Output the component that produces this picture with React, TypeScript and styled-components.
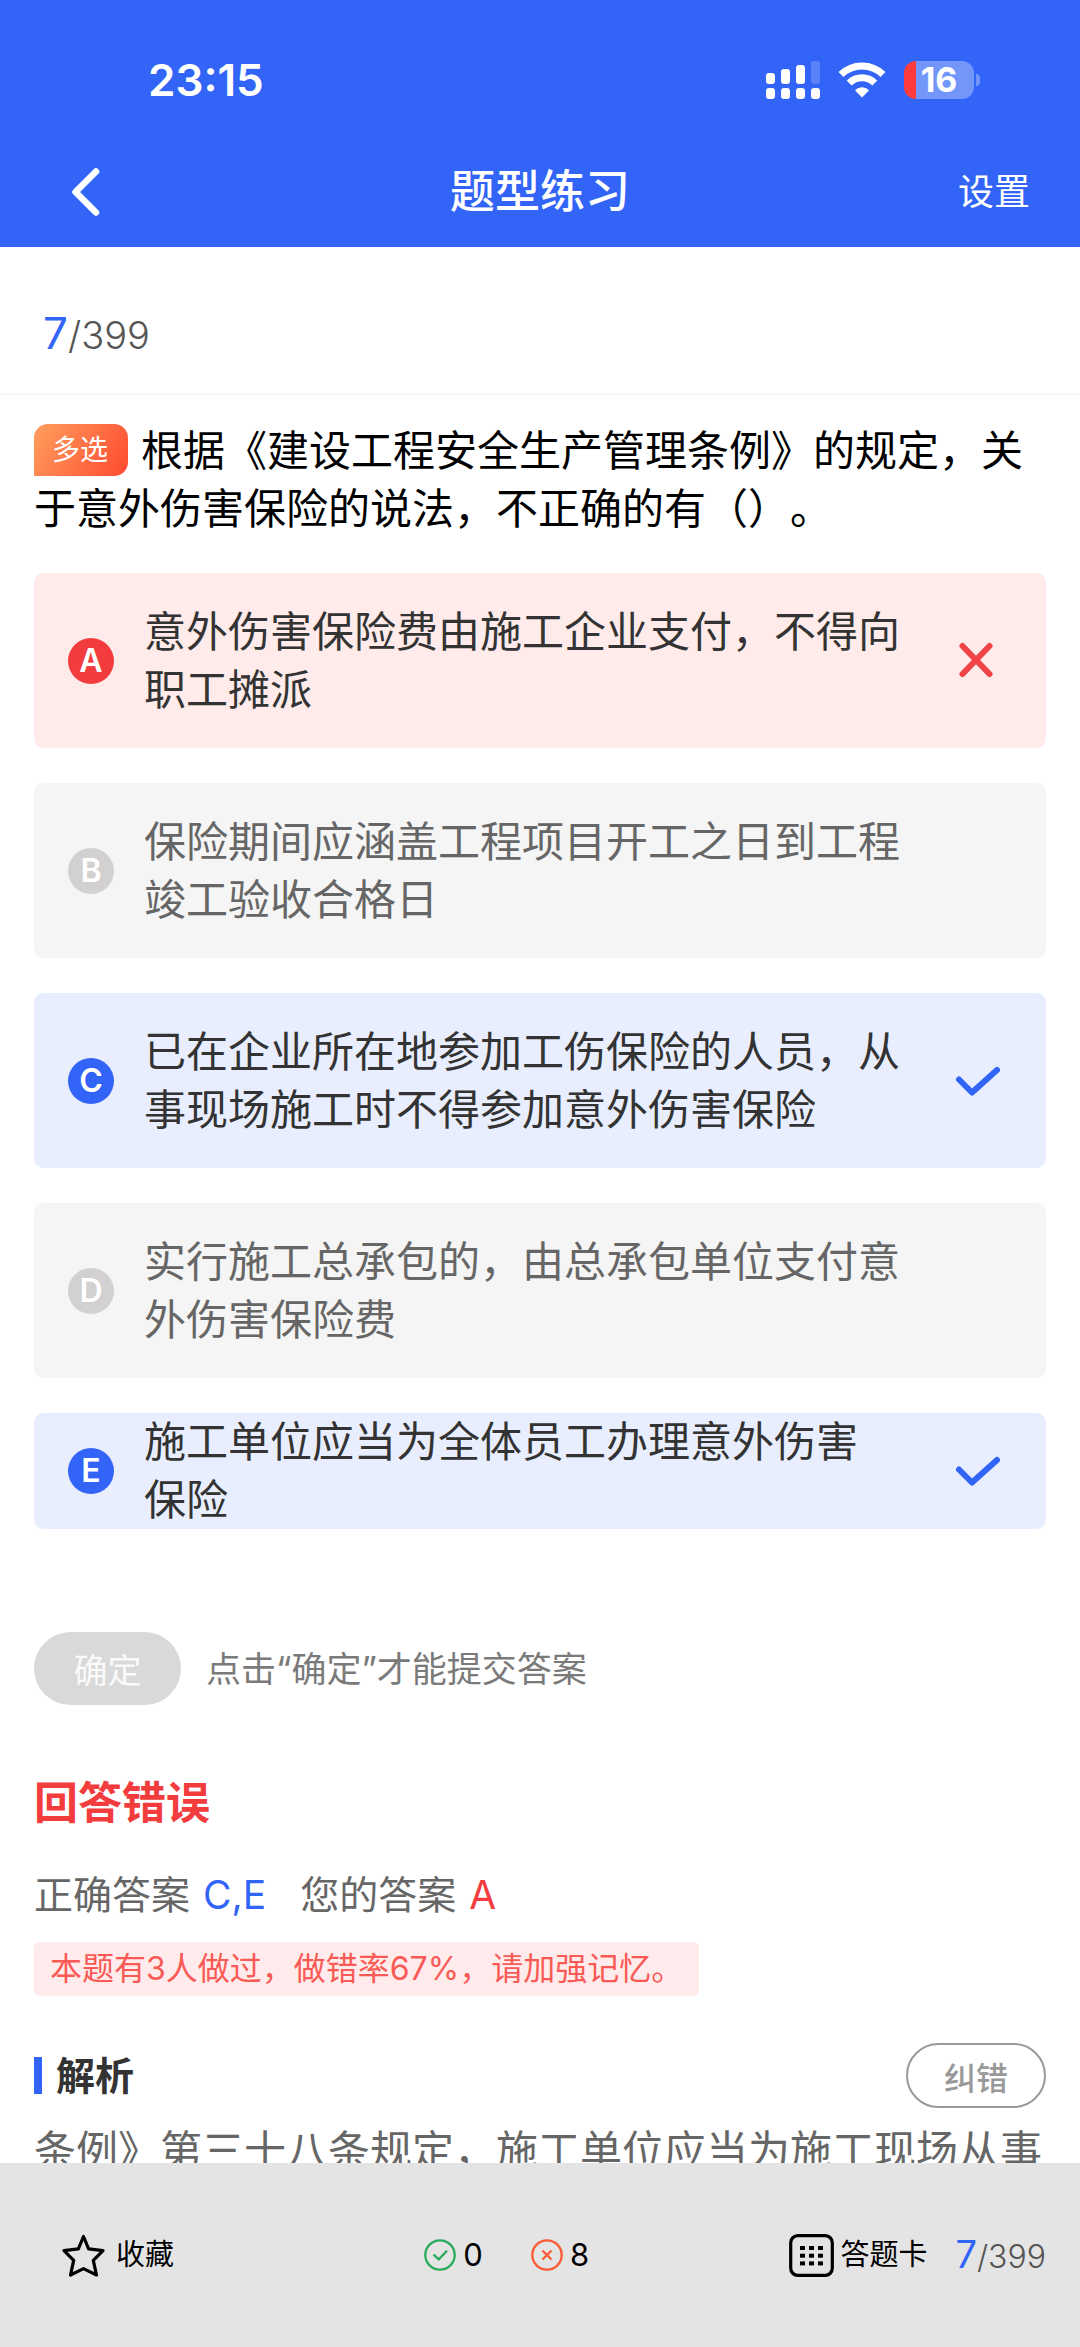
import React from "react";
import styled, { createGlobalStyle } from "styled-components";

const BLUE = "#3264f7";
const RED = "#f23c3e";

const GlobalStyle = createGlobalStyle`
  * { box-sizing: border-box; }
  body {
    margin: 0;
    background: #fff;
    font-family: Inter, "Noto Sans CJK SC", sans-serif;
    text-spacing-trim: space-all;
    -webkit-font-smoothing: antialiased;
  }
  button {
    font-family: inherit;
    border: 0;
    padding: 0;
    background: none;
    color: inherit;
    cursor: pointer;
  }
  h1, h2, p, ul { margin: 0; padding: 0; font-weight: 400; }
  svg { display: block; flex: none; }
`;

const Page = styled.div`
  display: flex;
  flex-direction: column;
  height: 100vh;
`;

const Header = styled.header`
  flex: none;
  background: ${BLUE};
  color: #fff;
`;

const StatusBar = styled.div`
  display: flex;
  align-items: center;
  justify-content: space-between;
  height: 137px;
  padding: 22px 100px 0 148px;
`;

const Clock = styled.time`
  font-size: 44px;
  line-height: 52px;
  font-weight: 600;
`;

const StatusIcons = styled.div`
  display: flex;
  align-items: center;
  gap: 18px;
`;

const BatteryWrap = styled.div`
  display: flex;
  align-items: center;
  gap: 2px;
`;

const Battery = styled.div`
  width: 70px;
  height: 38px;
  border-radius: 12px;
  background: linear-gradient(90deg, #ff3b3d 12px, #7396fa 12px);
  font-size: 34px;
  line-height: 38px;
  font-weight: 700;
  text-align: center;
`;

const BatteryNub = styled.div`
  width: 4px;
  height: 12px;
  border-radius: 0 4px 4px 0;
  background: #7396fa;
`;

const NavBar = styled.nav`
  display: grid;
  grid-template-columns: 1fr auto 1fr;
  align-items: center;
  height: 110px;
  padding: 0 50px;
`;

const BackButton = styled.button`
  justify-self: start;
  padding: 0 20px;
`;

const NavTitle = styled.h1`
  font-size: 45px;
  line-height: 60px;
  font-weight: 500;
`;

const SettingsButton = styled.button`
  justify-self: end;
  font-size: 36px;
  line-height: 48px;
`;

const Main = styled.main`
  flex: 1;
  min-height: 0;
  overflow-y: auto;
  scrollbar-width: none;
`;

const ProgressRow = styled.div`
  height: 148px;
  padding: 56px 43px 0;
  border-bottom: 2px solid #f6f6f6;
`;

const Progress = styled.span<{ $small?: boolean }>`
  font-size: ${(p) => (p.$small ? 32 : 38)}px;
  line-height: 60px;
  font-weight: 300;
  color: #555;
`;

const Current = styled.span<{ $small?: boolean }>`
  font-size: ${(p) => (p.$small ? 38 : 44)}px;
  font-weight: 400;
  color: ${BLUE};
`;

const Content = styled.div`
  padding: 27px 34px 0;
`;

const Question = styled.p`
  font-size: 42px;
  line-height: 58px;
  color: #000;
`;

const TypeBadge = styled.span`
  display: inline-block;
  vertical-align: top;
  height: 52px;
  margin: 2px 13px 0 0;
  padding: 0 20px 0 18px;
  border-radius: 14px 14px 14px 0;
  background: linear-gradient(120deg, #ff9f5e, #ff4a30);
  color: #fff;
  font-size: 28px;
  line-height: 52px;
`;

const OptionList = styled.ul`
  display: flex;
  flex-direction: column;
  gap: 35px;
  margin-top: 35px;
  list-style: none;
`;

type Tone = "wrong" | "right" | "idle";

const tones = {
  wrong: { card: "#feebea", dot: RED, text: "#333" },
  right: { card: "#e9eefe", dot: BLUE, text: "#333" },
  idle: { card: "#f5f5f5", dot: "#d2d0d0", text: "#666" },
};

const OptionCard = styled.button<{ $tone: Tone; $compact?: boolean }>`
  display: flex;
  align-items: center;
  width: 100%;
  padding: ${(p) => (p.$compact ? "0 44px 0 34px" : "30px 44px 29px 34px")};
  border-radius: 9px;
  background: ${(p) => tones[p.$tone].card};
  color: ${(p) => tones[p.$tone].text};
  text-align: left;
`;

const Letter = styled.span<{ $tone: Tone }>`
  flex: none;
  width: 46px;
  height: 46px;
  margin-right: 30px;
  border-radius: 50%;
  background: ${(p) => tones[p.$tone].dot};
  color: #fff;
  font-size: 32px;
  line-height: 46px;
  font-weight: 600;
  text-align: center;
`;

const OptionText = styled.span`
  flex: 1;
  padding-right: 24px;
  font-size: 42px;
  line-height: 58px;
  white-space: pre-line;
`;

const MarkSlot = styled.span`
  flex: none;
  width: 52px;
  height: 46px;
`;

const SubmitRow = styled.div`
  display: flex;
  align-items: center;
  gap: 25px;
  margin-top: 103px;
`;

const SubmitButton = styled.button`
  width: 147px;
  height: 73px;
  border-radius: 37px;
  background: #d9d9d9;
  color: #fafafa;
  font-size: 34px;
`;

const SubmitHint = styled.span`
  font-size: 35px;
  line-height: 48px;
  color: #7a7a7a;
`;

const Verdict = styled.h2`
  margin-top: 68px;
  font-size: 44px;
  line-height: 60px;
  font-weight: 700;
  color: ${RED};
`;

const AnswerRow = styled.div`
  display: flex;
  gap: 34px;
  margin-top: 37px;
  font-size: 39px;
  line-height: 50px;
  color: #666;
`;

const Answer = styled.span<{ $color: string }>`
  margin-left: 13px;
  color: ${(p) => p.$color};
`;

const StatTag = styled.p`
  width: fit-content;
  margin-top: 22px;
  padding: 0 16px;
  border-radius: 5px;
  background: #ffebeb;
  color: #f95a55;
  font-size: 32px;
  line-height: 54px;
`;

const SectionHead = styled.div`
  display: flex;
  align-items: center;
  justify-content: space-between;
  margin-top: 47px;
`;

const SectionTitle = styled.h2`
  display: flex;
  align-items: center;
  gap: 14px;
  font-size: 39px;
  line-height: 56px;
  font-weight: 700;
  color: #333;

  &::before {
    content: "";
    width: 8px;
    height: 37px;
    background: ${BLUE};
  }
`;

const ReportButton = styled.button`
  width: 140px;
  height: 65px;
  border: 2px solid #999;
  border-radius: 33px;
  color: #999;
  font-size: 32px;
  font-weight: 500;
`;

const Analysis = styled.p`
  margin-top: 14px;
  font-size: 42px;
  line-height: 58px;
  color: #666;
`;

const Footer = styled.footer`
  flex: none;
  display: flex;
  align-items: center;
  justify-content: space-between;
  height: 184px;
  padding: 0 34px 0 62px;
  background: #e4e4e4;
  color: #000;
`;

const FooterGroup = styled.div<{ $gap: number }>`
  display: flex;
  align-items: center;
  gap: ${(p) => p.$gap}px;
`;

const TallyGroup = styled.div`
  display: flex;
  align-items: center;
  gap: 48px;
  padding-left: 50px;
`;

const FooterButton = styled.button<{ $gap: number }>`
  display: flex;
  align-items: center;
  gap: ${(p) => p.$gap}px;
  font-size: 29px;
  line-height: 44px;
`;

const Tally = styled.span`
  display: flex;
  align-items: center;
  gap: 7px;
  font-size: 31px;
  line-height: 44px;
`;

const SignalIcon = () => (
  <svg width="54" height="38" viewBox="0 0 54 38" fill="#fff">
    <rect x="0" y="12" width="9" height="11" rx="3" />
    <rect x="15" y="8" width="9" height="15" rx="3" />
    <rect x="30" y="4" width="9" height="19" rx="3" />
    <rect x="45" y="0" width="9" height="23" rx="3" opacity=".2" />
    <rect x="0" y="27" width="9" height="11" rx="3" />
    <rect x="15" y="27" width="9" height="11" rx="3" />
    <rect x="30" y="27" width="9" height="11" rx="3" />
    <rect x="45" y="27" width="9" height="11" rx="3" />
  </svg>
);

const WifiIcon = () => (
  <svg width="48" height="36" viewBox="0 0 48 36">
    <path d="M3 12.5A30 30 0 0 1 45 12.5" fill="none" stroke="#fff" strokeWidth="7" />
    <path d="M11.2 21A18.300 18.300 0 0 1 36.800 21" fill="none" stroke="#fff" strokeWidth="7" />
    <path d="M24 35.500L17.300 28.800Q17.200 27.800 18.500 27A10 10 0 0 1 29.500 27Q30.800 27.800 30.700 28.800Z" fill="#fff" />
  </svg>
);

const BackIcon = () => (
  <svg width="32" height="50" viewBox="0 0 32 50" fill="none" stroke="#fff" strokeWidth="6.500" strokeLinecap="round" strokeLinejoin="round">
    <path d="M26 4.500L5.500 25L26 45.500" />
  </svg>
);

const CrossMark = () => (
  <svg width="52" height="46" viewBox="0 0 52 46" fill="none" stroke="#ef4345" strokeWidth="6" strokeLinecap="round">
    <path d="M12.500 8L39.500 36M39.500 8L12.500 36" />
  </svg>
);

const CheckMark = () => (
  <svg width="52" height="46" viewBox="0 0 52 46" fill="none" stroke={BLUE} strokeWidth="6" strokeLinecap="round" strokeLinejoin="round">
    <path d="M9 21.500L22 34.500L47 12" />
  </svg>
);

const StarIcon = () => (
  <svg width="43" height="43" viewBox="0 0 43 43" fill="none" stroke="#000" strokeWidth="3.200" strokeLinejoin="round">
    <path d="M21.500 2.500L26.600 14.800L41 16.600L31.300 26.300L34.500 41L21.500 34.600L8.500 41L11.700 26.300L2 16.600L16.400 14.800Z" />
  </svg>
);

const RightIcon = () => (
  <svg width="32" height="32" viewBox="0 0 32 32" fill="none" stroke="#2aab5b" strokeWidth="2.300">
    <circle cx="16" cy="16" r="14.700" />
    <path d="M9.500 15.500L14.800 20.300L23 11.800" />
  </svg>
);

const WrongIcon = () => (
  <svg width="32" height="32" viewBox="0 0 32 32" fill="none" stroke="#fb5b35" strokeWidth="2.300">
    <circle cx="16" cy="16" r="14.700" />
    <path d="M11.500 11.500L20.500 20.500M20.500 11.500L11.500 20.500" />
  </svg>
);

const CardIcon = () => (
  <svg width="45" height="43" viewBox="0 0 45 43">
    <rect x="1.700" y="1.700" width="41.600" height="39.600" rx="7" fill="none" stroke="#000" strokeWidth="3.200" />
    {[12, 19.700, 27.400].map((y) =>
      [11, 20, 29].map((x) => <rect key={`${x}-${y}`} x={x} y={y} width="5" height="4" />)
    )}
  </svg>
);

const options: { letter: string; text: string; tone: Tone; compact?: boolean }[] = [
  { letter: "A", text: "意外伤害保险费由施工企业支付，不得向职工摊派", tone: "wrong" },
  { letter: "B", text: "保险期间应涵盖工程项目开工之日到工程竣工验收合格日", tone: "idle" },
  { letter: "C", text: "已在企业所在地参加工伤保险的人员，从事现场施工时不得参加意外伤害保险", tone: "right" },
  { letter: "D", text: "实行施工总承包的，由总承包单位支付意外伤害保险费", tone: "idle" },
  { letter: "E", text: "施工单位应当为全体员工办理意外伤害\n保险", tone: "right", compact: true },
];

export default function App() {
  return (
    <>
      <GlobalStyle />
      <Page>
        <Header>
          <StatusBar>
            <Clock>23:15</Clock>
            <StatusIcons>
              <SignalIcon />
              <WifiIcon />
              <BatteryWrap>
                <Battery>16</Battery>
                <BatteryNub />
              </BatteryWrap>
            </StatusIcons>
          </StatusBar>
          <NavBar>
            <BackButton type="button" aria-label="返回">
              <BackIcon />
            </BackButton>
            <NavTitle>题型练习</NavTitle>
            <SettingsButton type="button">设置</SettingsButton>
          </NavBar>
        </Header>

        <Main>
          <ProgressRow>
            <Progress>
              <Current>7</Current>/399
            </Progress>
          </ProgressRow>

          <Content>
            <Question>
              <TypeBadge>多选</TypeBadge>
              根据《建设工程安全生产管理条例》的规定，关于意外伤害保险的说法，不正确的有（）。
            </Question>

            <OptionList>
              {options.map((o) => (
                <li key={o.letter}>
                  <OptionCard type="button" $tone={o.tone} $compact={o.compact}>
                    <Letter $tone={o.tone}>{o.letter}</Letter>
                    <OptionText>{o.text}</OptionText>
                    <MarkSlot>
                      {o.tone === "wrong" && <CrossMark />}
                      {o.tone === "right" && <CheckMark />}
                    </MarkSlot>
                  </OptionCard>
                </li>
              ))}
            </OptionList>

            <SubmitRow>
              <SubmitButton type="button">确定</SubmitButton>
              <SubmitHint>点击“确定”才能提交答案</SubmitHint>
            </SubmitRow>

            <Verdict>回答错误</Verdict>
            <AnswerRow>
              <span>
                正确答案<Answer $color={BLUE}>C,E</Answer>
              </span>
              <span>
                您的答案<Answer $color={RED}>A</Answer>
              </span>
            </AnswerRow>
            <StatTag>本题有3人做过，做错率67%，请加强记忆。</StatTag>

            <SectionHead>
              <SectionTitle>解析</SectionTitle>
              <ReportButton type="button">纠错</ReportButton>
            </SectionHead>
            <Analysis>条例》第三十八条规定，施工单位应当为施工现场从事</Analysis>
          </Content>
        </Main>

        <Footer>
          <FooterButton type="button" $gap={11}>
            <StarIcon />
            收藏
          </FooterButton>
          <TallyGroup>
            <Tally>
              <RightIcon />0
            </Tally>
            <Tally>
              <WrongIcon />8
            </Tally>
          </TallyGroup>
          <FooterGroup $gap={28}>
            <FooterButton type="button" $gap={6}>
              <CardIcon />
              答题卡
            </FooterButton>
            <Progress $small>
              <Current $small>7</Current>/399
            </Progress>
          </FooterGroup>
        </Footer>
      </Page>
    </>
  );
}
